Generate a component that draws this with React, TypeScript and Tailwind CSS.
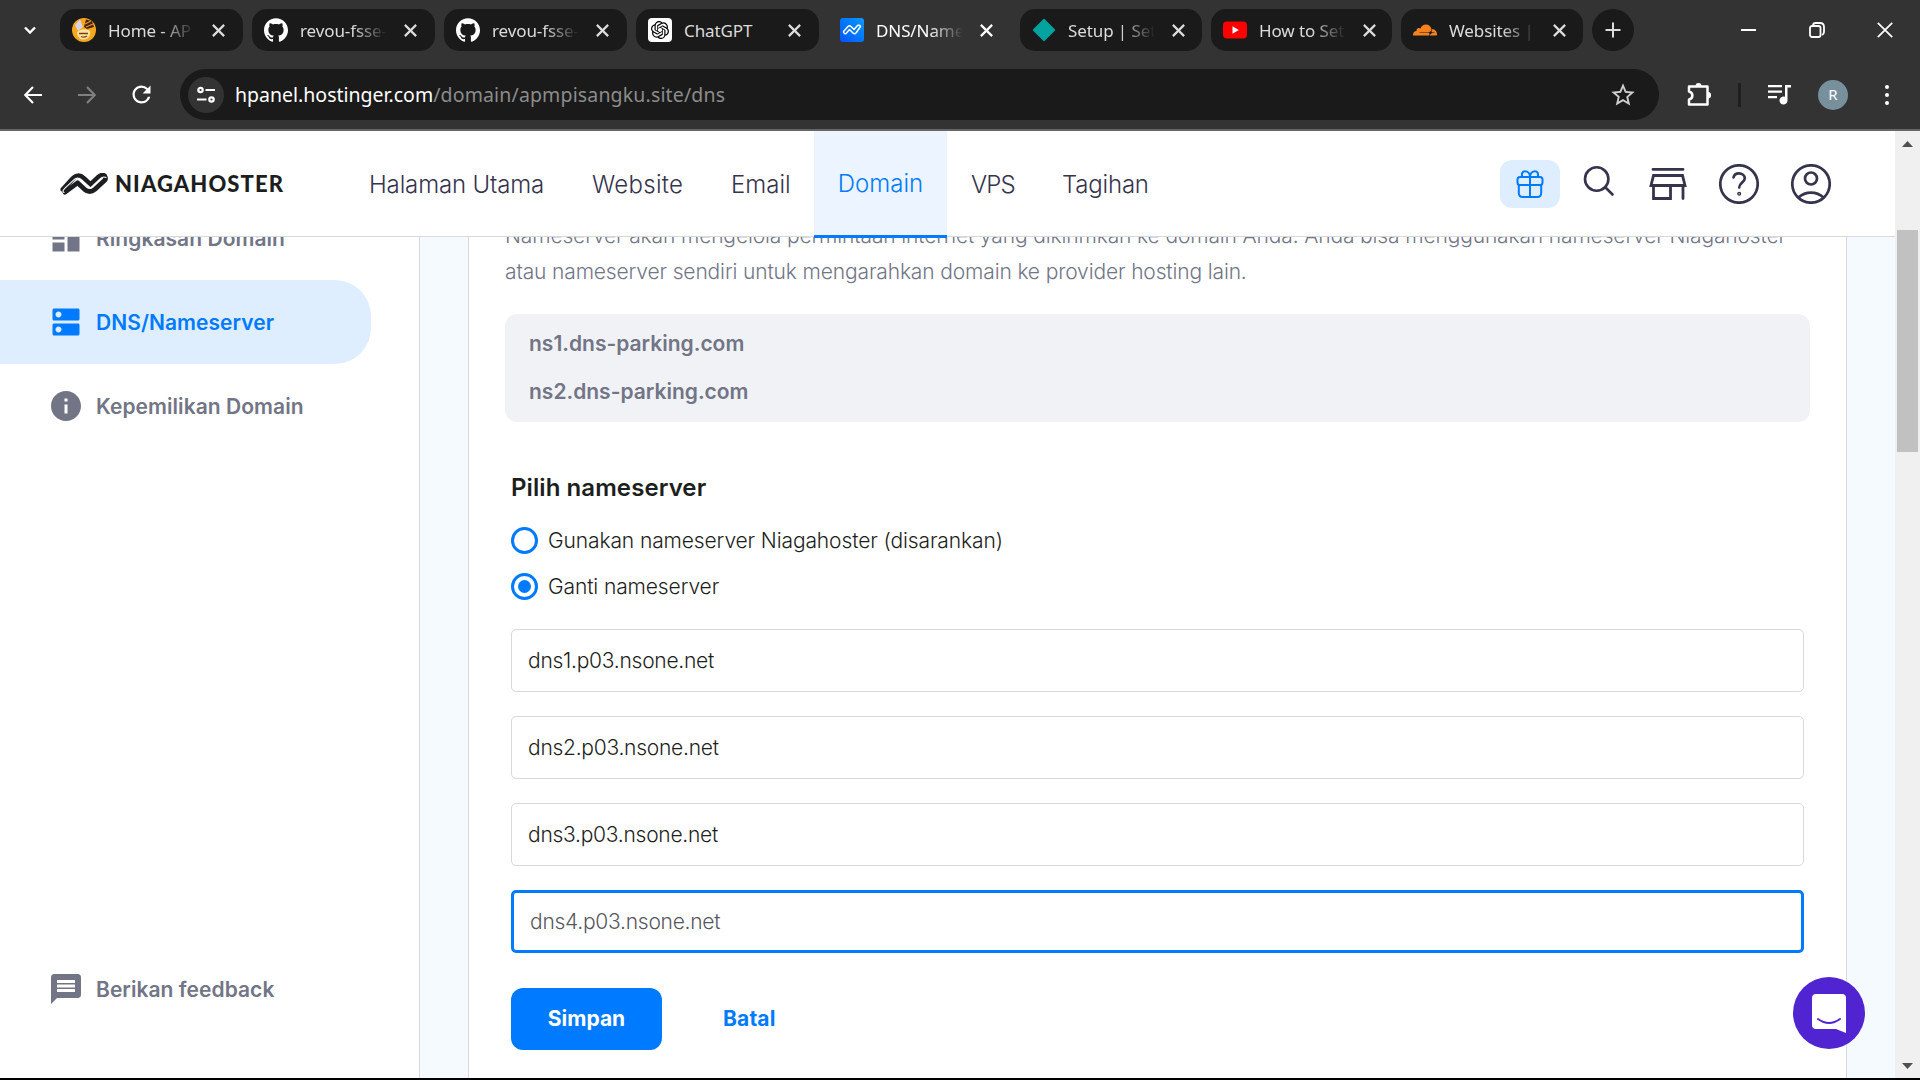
import React from "react";
import { SiOpenai, SiCloudflare, SiGithub } from "react-icons/si";
import { MdDns, MdInfo, MdDashboard, MdMessage, MdStarBorder, MdRefresh } from "react-icons/md";

const UI = "font-['Noto_Sans',sans-serif]";

function NinjaBall() {
  return (
    <svg viewBox="0 0 24 24" className="size-6">
      <circle cx="12" cy="12" r="12" fill="#f5a81c" />
      <path d="M3 7 8 1.5l3 7.5-5 4z" fill="#d9d4e4" />
      <path d="M12 9 14 1.5 20 3l2 6-7 2z" fill="#4a2410" />
      <path d="m13 6 6-3M14 9l7-3" stroke="#e8913a" strokeWidth="1.2" />
      <path d="M5 14c3-3 9-4 13-1 1 5-2 8-6 8.500s-7-3-7-7.500z" fill="#ffe3a0" />
      <path d="M7 15.500h9M9 18.500c2 1 4 1 6-.5" stroke="#7a4212" strokeWidth="1.300" fill="none" />
    </svg>
  );
}

function Chat() {
  return (
    <span className="flex size-6 items-center justify-center rounded-[4px] bg-white text-black">
      <SiOpenai className="size-[18px]" />
    </span>
  );
}

function Wave() {
  return (
    <span className="flex size-6 items-center justify-center rounded-[3px] bg-linear-to-bl from-[#1499ff] to-[#0a50ff]">
      <svg viewBox="0 0 20 12" className="h-3 w-5" fill="none" stroke="white" strokeWidth="1.500" strokeLinejoin="round">
        <path d="M1.500 7.500 6 2.500q1.500-1.500 3 0l3 3 3.500-4q2-1 3 1L14 9q-1.500 1.500-3 0L7.500 5.500 4 9.500q-2 1-2.500-2z" />
      </svg>
    </span>
  );
}

function Diamond() {
  return (
    <svg viewBox="0 0 24 24" className="size-6">
      <path d="M12 1.500 22.500 12 12 22.500 1.500 12z" fill="#05a3a0" stroke="#05a3a0" strokeWidth="1.500" strokeLinejoin="round" />
    </svg>
  );
}

function Tube() {
  return (
    <svg viewBox="0 0 24 24" className="size-6">
      <rect y="3.500" width="24" height="17" rx="4" fill="#f00" />
      <path d="m9.500 8.300 6.300 3.700-6.300 3.700z" fill="#fff" />
    </svg>
  );
}

const Hub = () => <SiGithub className="size-6 text-white" />;
const Flare = () => <SiCloudflare className="size-6 text-[#f6821f]" />;

function Cross({ className }: { className: string }) {
  return (
    <svg viewBox="0 0 12 12" className={className} fill="none" stroke="currentColor" strokeWidth="2">
      <path d="m.8.800 10.400 10.400M11.200.8.800 11.200" />
    </svg>
  );
}

const tabs = [
  { icon: <NinjaBall />, title: "Home - AP", w: "w-[183px]" },
  { icon: <Hub />, title: "revou-fsse-", w: "w-[183px]" },
  { icon: <Hub />, title: "revou-fsse-", w: "w-[183px]" },
  { icon: <Chat />, title: "ChatGPT", w: "w-[183px]", full: true },
  { icon: <Wave />, title: "DNS/Name", w: "w-[183px]", active: true },
  { icon: <Diamond />, title: "Setup | Set", w: "w-[182px]" },
  { icon: <Tube />, title: "How to Set", w: "w-[181px]" },
  { icon: <Flare />, title: "Websites |", w: "w-[182px]" },
];

function Browser() {
  return (
    <div className={`flex h-[131px] shrink-0 flex-col border-b-2 border-[#666] bg-[#333] text-white ${UI}`}>
      <div className="flex h-[60px] items-center">
        <div className="flex w-[60px] justify-center">
          <svg viewBox="0 0 12 8" className="h-2 w-3" fill="none" stroke="white" strokeWidth="2.400">
            <path d="m1 1.500 5 5 5-5" />
          </svg>
        </div>
        <div className="flex gap-[9px]">
          {tabs.map((t, i) => (
            <div key={i} className={`flex h-[42px] items-center rounded-[15px] pl-3 ${t.w} ${t.active ? "" : "bg-[#1a1a1a]"}`}>
              <span className="size-6 shrink-0">{t.icon}</span>
              <span
                className={`mt-[2px] ml-3 w-[87px] shrink-0 text-[17px] leading-6 tracking-[-0.100px] whitespace-nowrap ${t.full ? "" : "mask-r-from-60% mask-r-to-100%"} ${t.active ? "text-white" : "text-[#dcdcdc]"}`}
              >
                {t.title}
              </span>
              <Cross className={`ml-[17px] size-[13px] shrink-0 ${t.active ? "text-white" : "text-[#dcdcdc]"}`} />
            </div>
          ))}
          <div className="flex size-[42px] items-center justify-center rounded-full bg-[#1a1a1a]">
            <svg viewBox="0 0 16 16" className="size-4" stroke="#dcdcdc" strokeWidth="2">
              <path d="M8 .5v15M.5 8h15" />
            </svg>
          </div>
        </div>
        <div className="ml-auto flex w-[205px] items-center justify-between pr-[27px] pl-[26px]">
          <span className="h-[2px] w-[15px] bg-white" />
          <svg viewBox="0 0 16 16" className="size-4" fill="none" stroke="white" strokeWidth="1.800">
            <rect x="1" y="4" width="10.500" height="11" rx="2" />
            <path d="M4 3.500Q4.200 1 6.500 1H11q4 0 4 4v5q0 2-2 3" />
          </svg>
          <svg viewBox="0 0 16 16" className="size-4" stroke="white" strokeWidth="1.700">
            <path d="m.8.800 14.400 14.400M15.200.8.800 15.200" />
          </svg>
        </div>
      </div>
      <div className="flex h-[69px] items-center">
        <div className="flex w-[180px] items-center pl-6">
          <svg viewBox="0 0 18 18" className="size-[18px]" fill="none" stroke="white" strokeWidth="2.100">
            <path d="M18 9H1.500M9 1 1.300 9 9 17" />
          </svg>
          <svg viewBox="0 0 18 18" className="ml-9 size-[18px]" fill="none" stroke="#808080" strokeWidth="2.100">
            <path d="M0 9h16.500M9 1l7.700 8L9 17" />
          </svg>
          <MdRefresh className="ml-[32px] size-[27px]" />
        </div>
        <div className="flex h-[51px] w-[1479px] items-center rounded-full bg-[#1a1a1a] pl-[8px]">
          <span className="flex size-9 items-center justify-center rounded-full bg-[#333]">
            <svg viewBox="0 0 18 18" className="size-[18px]" fill="none" stroke="white" strokeWidth="2.200">
              <circle cx="3.500" cy="4" r="2.200" />
              <path d="M8.500 4H18M0 13.500h9.500" />
              <circle cx="14.500" cy="13.500" r="2.200" />
            </svg>
          </span>
          <span className="ml-[11px] text-[19.500px] leading-7 whitespace-nowrap">
            hpanel.hostinger.com<span className="tracking-[0.150px] text-[#8c8c8c]">/domain/apmpisangku.site/dns</span>
          </span>
          <MdStarBorder className="mr-[22px] ml-auto size-[28px] text-[#cfcfcf]" />
        </div>
        <div className="flex grow items-center pl-[28px]">
          <svg viewBox="0 0 25 25" className="size-[25px]" fill="none" stroke="white" strokeWidth="2.500" strokeLinejoin="round">
            <path d="M2 4.500H20.500V22.500H2V17.500c4.500-1 4.500-7 0-8z" />
            <path d="M8.500 4a3 3 0 0 1 6 0zM21 10a3 3.200 0 0 1 0 6.500z" fill="white" stroke="none" />
          </svg>
          <span className="ml-[26px] h-[24px] w-[3px] bg-[#1f1f1f]" />
          <svg viewBox="0 0 23 20" className="ml-[27px] h-[20px] w-[23px]" fill="white">
            <path d="M0 0h14v2.300H0zM0 5.500h14v2.300H0zM0 11h9v2.300H0z" />
            <path d="M17 0h6v2.600h-3.500V15.500a4 4 0 1 1-2.500-3.700z" />
          </svg>
          <span className="ml-[27px] flex size-[30px] items-center justify-center rounded-full bg-[#78909c] text-[15px] leading-none text-white">R</span>
          <span className="ml-[37px] flex flex-col gap-[4px]">
            <i className="size-1 rounded-full bg-white" />
            <i className="size-1 rounded-full bg-white" />
            <i className="size-1 rounded-full bg-white" />
          </span>
        </div>
      </div>
    </div>
  );
}

function LogoMark() {
  return (
    <svg viewBox="0 0 48 22" className="h-[22px] w-12" fill="none" strokeLinecap="round" strokeLinejoin="round">
      <path d="M3 16.500 12.500 6q5.500-6 11.500-.5l6.500 6L38 4.500q4-3.500 6.500-1.500" stroke="#1d1e20" strokeWidth="5" />
      <path d="M5 19.200 17.500 9.800l7 6.500q5.500 4.500 10.500 0L45 7q1.200-2-.5-4" stroke="#1d1e20" strokeWidth="4.800" />
      <path d="M4 19.500Q1.500 18.500 5 15.200l8.500-8q4-4 8.500 0l8.500 7.600 9-8.500Q43 3 46 4.500" stroke="white" strokeWidth="1.100" />
    </svg>
  );
}

function Header() {
  const item = "text-[24px] leading-[30px] font-light whitespace-nowrap";
  return (
    <header className="relative z-10 flex h-[106px] shrink-0 items-start border-b border-[#d8d9dd] bg-white text-[#36344d]">
      <div className="ml-[60px] flex h-[106px] w-[309px] items-center gap-[7px]">
        <LogoMark />
        <span className="font-['Lato',sans-serif] text-[22px] leading-none font-black tracking-[1.100px] text-[#1d1e20]">NIAGAHOSTER</span>
      </div>
      <nav className="flex h-[107px] items-center">
        <span className={`${item} w-[223px] tracking-[-0.150px]`}>Halaman Utama</span>
        <span className={`${item} w-[139px] tracking-[0.300px]`}>Website</span>
        <span className={`${item} w-[83px]`}>Email</span>
        <span className={`${item} flex h-[107px] w-[133px] items-center justify-center border-b-3 border-[#007bff] bg-[#ebf4ff] text-[#007bff]`}>
          <span className="pt-px">Domain</span>
        </span>
        <span className={`${item} ml-[24px] w-[91px] tracking-[-0.900px]`}>VPS</span>
        <span className={`${item} tracking-[-0.200px]`}>Tagihan</span>
      </nav>
      <div className="mr-[64px] ml-auto flex h-[106px] items-center">
        <span className="flex h-12 w-[60px] items-center justify-center rounded-xl bg-[#dfeeff]">
          <svg viewBox="0 0 28 28" className="size-7" fill="none" stroke="#007bff" strokeWidth="2">
            <rect x="1.500" y="7" width="25" height="8" rx="2.500" />
            <path d="M2.800 15v8q0 4 4 4h14.400q4 0 4-4v-8M14 7v20" />
            <path d="M14 7C14 3 11.500 1.200 9 1.200S5 4 6.500 7M14 7c0-4 2.500-5.800 5-5.800S23 4 21.500 7" />
          </svg>
        </span>
        <svg viewBox="0 0 32 32" className="ml-6 size-8 overflow-visible" fill="none" stroke="#36344d" strokeWidth="2.600" strokeLinecap="round">
          <circle cx="12.700" cy="11" r="11.700" />
          <path d="m21.500 19.500 7 7" />
        </svg>
        <svg viewBox="0 0 38 32" className="ml-[33px] h-8 w-[38px]" fill="none" stroke="#36344d" strokeWidth="2.800" strokeLinecap="round">
          <path d="M4 1.400h30M4.500 7.500h29l2.500 10H2zM4.500 18v12.500h17V18M34 18v12.500" />
        </svg>
        <svg viewBox="0 0 40 40" className="ml-[32px] size-10" fill="none" stroke="#36344d" strokeWidth="2.700" strokeLinecap="round">
          <circle cx="20" cy="20" r="18.700" />
          <path d="M14.500 13.500c.5-2.500 2.500-4.200 5.500-4.200s5.800 2 5.800 5c0 4-5.600 4.500-5.600 9.200" />
          <circle cx="20.200" cy="29.800" r=".7" />
        </svg>
        <svg viewBox="0 0 40 40" className="ml-8 size-10" fill="none" stroke="#36344d" strokeWidth="2.700">
          <circle cx="20" cy="20" r="18.700" />
          <circle cx="20" cy="14.500" r="6" />
          <path d="M7.500 33.500c7-6.500 18-6.500 25 0" />
        </svg>
      </div>
    </header>
  );
}

function SideItem({ icon, label, active }: { icon: React.ReactNode; label: string; active?: boolean }) {
  return (
    <div className={`flex h-[84px] w-[371px] shrink-0 items-center rounded-r-[36px] pl-12 ${active ? "bg-[#dfeeff] text-[#007bff]" : "text-[#727586]"}`}>
      {icon}
      <span className="mt-px ml-[12px] text-[21px] leading-7 font-semibold tracking-[0.050px]">{label}</span>
    </div>
  );
}

function Sidebar() {
  return (
    <aside className="-mt-[41px] flex w-[420px] shrink-0 flex-col border-r border-[#d8d9dd] bg-white">
      <SideItem icon={<MdDashboard className="size-9" />} label="Ringkasan Domain" />
      <SideItem icon={<MdDns className="size-9" />} label="DNS/Nameserver" active />
      <SideItem icon={<MdInfo className="size-9" />} label="Kepemilikan Domain" />
      <div className="mt-auto mb-[47px]">
        <SideItem icon={<MdMessage className="size-9" />} label="Berikan feedback" />
      </div>
    </aside>
  );
}

function Radio({ label, checked }: { label: string; checked?: boolean }) {
  return (
    <div className="flex h-[46px] items-center">
      <span className="flex size-[27px] items-center justify-center rounded-full border-3 border-[#007bff]">
        {checked && <i className="size-[13px] rounded-full bg-[#007bff]" />}
      </span>
      <span className="mt-px ml-[10px] text-[21px] leading-7 font-[350] tracking-[-0.110px] text-[#1d1e20]">{label}</span>
    </div>
  );
}

function Card() {
  return (
    <section className="-mt-[19px] ml-[48px] flex w-[1379px] flex-col border-x border-[#d8d9dd] bg-white pr-9 pl-9">
      <p className="text-[21px] leading-9 font-[350] tracking-[-0.140px] whitespace-nowrap text-[#727586]">
        Nameserver akan mengelola permintaan internet yang dikirimkan ke domain Anda. Anda bisa menggunakan nameserver Niagahoster
        <br />
        atau nameserver sendiri untuk mengarahkan domain ke provider hosting lain.
      </p>
      <div className="mt-[24px] flex h-[108px] flex-col justify-center rounded-xl bg-[#f1f2f6] pl-6 text-[21px] leading-12 font-semibold text-[#727586]">
        <span>ns1.dns-parking.com</span>
        <span>ns2.dns-parking.com</span>
      </div>
      <div className="mx-[6px] flex flex-col">
        <h2 className="mt-[48px] text-[24px] leading-9 font-semibold tracking-[0.080px] text-[#1d1e20]">Pilih nameserver</h2>
        <div className="mt-[11px]">
          <Radio label="Gunakan nameserver Niagahoster (disarankan)" />
          <Radio label="Ganti nameserver" checked />
        </div>
        <div className="mt-[20px] flex flex-col gap-6 text-[21px] font-[350] tracking-[-0.260px] text-[#1d1e20]">
          <div className="flex h-[63px] items-center rounded-[5px] border border-[#d8d9dd] pl-4">dns1.p03.nsone.net</div>
          <div className="flex h-[63px] items-center rounded-[5px] border border-[#d8d9dd] pl-4">dns2.p03.nsone.net</div>
          <div className="flex h-[63px] items-center rounded-[5px] border border-[#d8d9dd] pl-4">dns3.p03.nsone.net</div>
          <div className="flex h-[63px] items-center rounded-[5px] border-3 border-[#007bff] pl-4 text-[#56585e]">dns4.p03.nsone.net</div>
        </div>
        <div className="mt-[35px] flex h-[62px] text-[21px] font-bold">
          <button className="w-[151px] rounded-xl bg-[#007bff] text-white">Simpan</button>
          <button className="ml-[61px] tracking-[0.150px] text-[#007bff]">Batal</button>
        </div>
      </div>
    </section>
  );
}

function Scrollbar() {
  return (
    <div className="flex w-[25px] shrink-0 flex-col items-center bg-[#f0f0f0]">
      <svg viewBox="0 0 11 6" className="mt-[10px] h-[6px] w-[11px]" fill="#505050"><path d="M0 6 5.500 0 11 6z" /></svg>
      <div className="mt-[83px] h-[222px] w-[21px] bg-[#c1c1c1]" />
      <svg viewBox="0 0 11 6" className="mt-auto mb-[9px] h-[6px] w-[11px]" fill="#505050"><path d="M0 0h11L5.500 6z" /></svg>
    </div>
  );
}

export default function App() {
  return (
    <div className="flex h-[1080px] w-[1920px] flex-col overflow-hidden border-b-2 border-black bg-white font-['Inter',sans-serif]">
      <Browser />
      <div className="relative flex min-h-0 grow">
        <div className="flex min-w-0 grow flex-col">
          <Header />
          <div className="flex min-h-0 grow overflow-hidden bg-[#f4faff]">
            <Sidebar />
            <Card />
          </div>
        </div>
        <Scrollbar />
        <div className="absolute right-[55px] bottom-[29px] flex size-[72px] items-center justify-center rounded-full bg-[#5025d1]">
          <svg viewBox="0 0 34 39" className="h-[39px] w-[34px]">
            <path d="M4 0h26q4 0 4 4v35l-10-4H4q-4 0-4-4V4q0-4 4-4z" fill="#fff" />
            <path d="M6 25q11 8 22 0" fill="none" stroke="#5025d1" strokeWidth="2" strokeLinecap="round" />
          </svg>
        </div>
      </div>
    </div>
  );
}
